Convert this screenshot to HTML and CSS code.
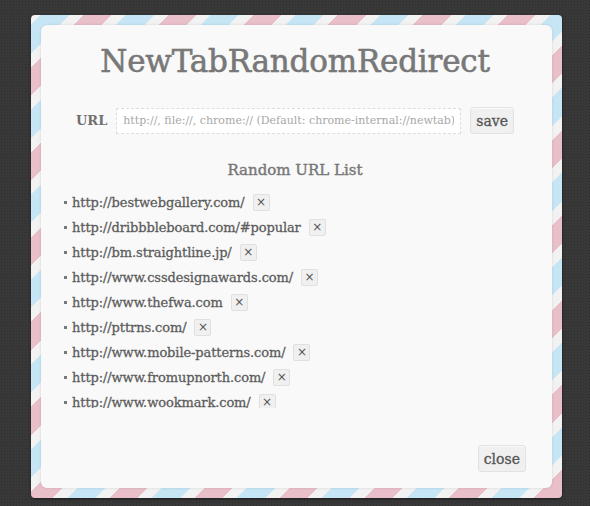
FILE: index.html
```html
<!DOCTYPE html>
<html>
<head>
<meta charset="utf-8">
<link rel="stylesheet" href="styles.css">
</head>
<body>
<div class="frame">
  <div class="card">
    <h1 class="title">NewTabRandomRedirect</h1>
    <div class="url-row">
      <label class="url-label">URL</label>
      <input class="url-input" type="text" placeholder="http://, file://, chrome:// (Default: chrome-internal://newtab)">
      <button class="btn">save</button>
    </div>
    <h2 class="list-title">Random URL List</h2>
    <ul class="url-list">
      <li><span class="url">http://bestwebgallery.com/</span><button class="del">×</button></li>
      <li><span class="url">http://dribbbleboard.com/#popular</span><button class="del">×</button></li>
      <li><span class="url">http://bm.straightline.jp/</span><button class="del">×</button></li>
      <li><span class="url">http://www.cssdesignawards.com/</span><button class="del">×</button></li>
      <li><span class="url">http://www.thefwa.com</span><button class="del">×</button></li>
      <li><span class="url">http://pttrns.com/</span><button class="del">×</button></li>
      <li><span class="url">http://www.mobile-patterns.com/</span><button class="del">×</button></li>
      <li><span class="url">http://www.fromupnorth.com/</span><button class="del">×</button></li>
      <li><span class="url">http://www.wookmark.com/</span><button class="del">×</button></li>
    </ul>
    <div class="footer">
      <button class="btn">close</button>
    </div>
  </div>
</div>
</body>
</html>
```
FILE: styles.css
```css
html, body {
  margin: 0;
  height: 100%;
}
body {
  background-color: #383838;
  background-image: radial-gradient(rgba(0,0,0,0.18) 0.6px, transparent 0.8px);
  background-size: 3px 3px;
  font-family: "DejaVu Serif", serif;
  padding: 15px 28px 8px 31px;
  box-sizing: border-box;
}
.frame {
  width: 511px;
  height: 463px;
  padding: 10px;
  border-radius: 4px;
  background: repeating-linear-gradient(-45deg,
    #e9bfca 0, #e9bfca 20px,
    #f2f2f2 20px, #f2f2f2 30px,
    #c6e6f6 30px, #c6e6f6 50px,
    #f2f2f2 50px, #f2f2f2 60px);
  box-shadow: 0 1px 3px rgba(0,0,0,0.5);
}
.card {
  height: 100%;
  background: #f9f9f9;
  border-radius: 6px;
  box-shadow: 0 0 3px rgba(0,0,0,0.12);
  display: flex;
  flex-direction: column;
  padding: 0 26px 16px 23px;
  box-sizing: border-box;
}
.title {
  margin: 14px 0 0;
  text-align: center;
  font-size: 31px;
  line-height: 44px;
  font-weight: normal;
  color: #787878;
  letter-spacing: -0.2px;
  -webkit-text-stroke: 0.6px #787878;
}
.url-row {
  display: flex;
  justify-content: center;
  align-items: center;
  gap: 9px;
  margin-top: 24px;
}
.url-label {
  font-size: 13px;
  font-weight: bold;
  color: #707070;
  margin-right: 0;
}
.url-input {
  width: 345px;
  height: 26px;
  box-sizing: border-box;
  border: 1px dashed #ddd;
  background: #fff;
  padding: 0 6px;
  font-family: "DejaVu Serif", serif;
  font-size: 11px;
  color: #666;
  outline: none;
}
.url-input::placeholder {
  font-family: "DejaVu Serif", serif;
  color: #a8a8a8;
}
.btn {
  font-family: "DejaVu Serif", serif;
  font-size: 14px;
  color: #555;
  background: #f0f0f0;
  border: 1px solid #e2e2e2;
  border-radius: 3px;
  padding: 0 5px;
  height: 27px;
  box-shadow: inset 0 1px 0 #fafafa;
  -webkit-text-stroke: 0.3px #555;
}
.list-title {
  margin: 24px 0 0;
  text-align: center;
  font-size: 15px;
  line-height: 24px;
  font-weight: normal;
  color: #777;
  -webkit-text-stroke: 0.4px #777;
}
.url-list {
  list-style: none;
  margin: 8px 0 0;
  padding: 0;
  height: 218px;
  overflow: hidden;
}
.url-list li {
  display: flex;
  align-items: center;
  height: 25px;
  font-size: 13px;
  color: #5c5c5c;
  letter-spacing: -0.1px;
  -webkit-text-stroke: 0.3px #5c5c5c;
}
.url-list li::before {
  content: "";
  width: 3px;
  height: 3px;
  background: #777;
  margin-right: 5px;
}
.del {
  margin-left: 8px;
  width: 17px;
  height: 17px;
  padding: 0;
  font-family: "DejaVu Sans", sans-serif;
  font-size: 12px;
  line-height: 15px;
  color: #555;
  background: #f0f0f0;
  border: 1px solid #e0e0e0;
  border-radius: 2px;
  -webkit-text-stroke: 0;
}
.footer {
  margin-top: auto;
  display: flex;
  justify-content: flex-end;
}
```
